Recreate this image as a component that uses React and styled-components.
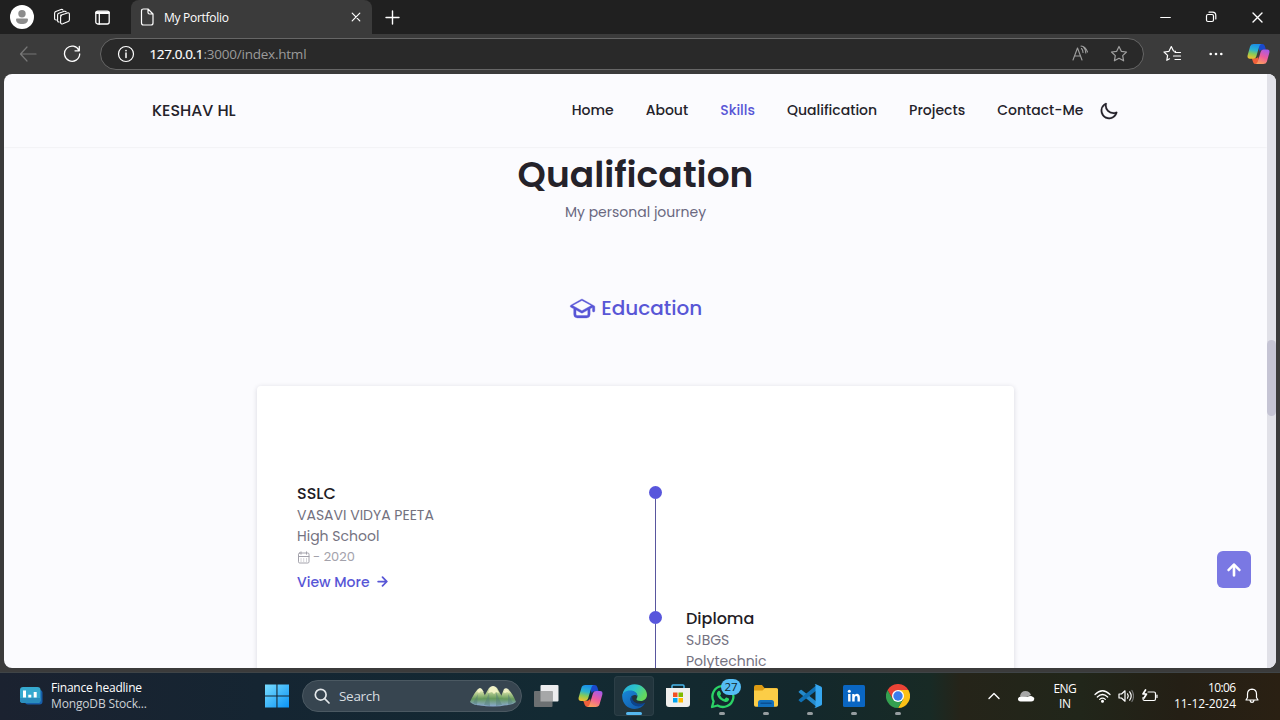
import React from "react";
import styled, { createGlobalStyle } from "styled-components";

const GlobalStyle = createGlobalStyle`
  * { box-sizing: border-box; }
  body { margin: 0; background: #3b3b3b; overflow: hidden; }
  h1, h2, h3, p { margin: 0; }
  svg { display: block; flex: none; }
`;

const Text = styled.span`
  letter-spacing: ${(p) => p.$track || 0}px;
  margin-right: ${(p) => -(p.$track || 0)}px;
  white-space: nowrap;
`;

const Desktop = styled.div`
  display: flex;
  flex-direction: column;
  width: 1280px;
  height: 720px;
  overflow: hidden;
  background: #3b3b3b;
  font-family: "Segoe UI", "Open Sans", "Noto Sans", sans-serif;
`;

/* ---------- browser chrome ---------- */
const TitleBar = styled.header`
  display: flex;
  height: 34px;
  flex: none;
  background: #202020;
`;
const TitleTools = styled.div`
  display: flex;
  align-items: center;
  gap: 19px;
  width: 131px;
  padding-left: 10px;
  svg:last-child { margin-left: 5px; }
`;
const Tab = styled.div`
  display: flex;
  align-items: center;
  width: 241px;
  padding: 0 11px 0 8px;
  border-radius: 8px 8px 0 0;
  background: #3b3b3b;
  color: #fff;
  font-size: 12px;
`;
const TabTitle = styled(Text)`
  flex: 1;
  margin-left: 9px;
`;
const NewTab = styled.div`
  display: flex;
  align-items: center;
  margin-left: 13px;
  flex: 1;
`;
const WindowControls = styled.div`
  display: flex;
  align-items: center;
`;
const WindowButton = styled.div`
  display: flex;
  align-items: center;
  justify-content: center;
  width: 46px;
`;
const Toolbar = styled.div`
  display: flex;
  align-items: center;
  flex: none;
  height: 40px;
  padding: 0 10px 0 19px;
`;
const NavButtons = styled.div`
  display: flex;
  align-items: center;
  gap: 26px;
  width: 81px;
`;
const AddressBar = styled.div`
  display: flex;
  align-items: center;
  flex: none;
  width: 1044px;
  height: 32px;
  padding: 0 15px 0 16px;
  border: 1px solid #666;
  border-radius: 16px;
  background: #292929;
  font-size: 13.5px;
  color: #9b9b9b;
`;
const Host = styled(Text)`
  margin-left: 14.5px;
  color: #fff;
  -webkit-text-stroke: 0.2px #fff;
`;
const Path = styled(Text)`
  flex: 1;
`;
const AddressActions = styled.div`
  display: flex;
  align-items: center;
  gap: 21px;
`;
const ToolbarActions = styled.div`
  display: flex;
  align-items: center;
  flex: 1;
  margin-left: 19px;
  svg:nth-child(2) { margin: 0 24px 0 27px; }
`;

/* ---------- page ---------- */
const Viewport = styled.div`
  display: flex;
  flex: none;
  height: 594px;
  margin: 0 4px 4px;
  border-radius: 8px;
  overflow: hidden;
  background: #fbfbfe;
  font-family: "Poppins", "Inter", sans-serif;
  color: #24222a;
`;
const Page = styled.main`
  display: flex;
  flex-direction: column;
  align-items: center;
  width: 1263px;
  overflow: hidden;
`;
const SiteHeader = styled.div`
  display: flex;
  align-items: center;
  justify-content: space-between;
  flex: none;
  width: 100%;
  height: 73px;
  padding: 0 148px;
  box-shadow: 0 0 2px rgba(0, 0, 0, 0.1);
`;
const Brand = styled(Text)`
  font-size: 15.9px;
  font-weight: 500;
`;
const Menu = styled.nav`
  display: flex;
  align-items: center;
  font-size: 14px;
  font-weight: 500;
  svg { stroke: currentColor; stroke-width: 0.2; }
`;
const MenuList = styled.div`
  display: flex;
  gap: 32px;
  margin: 0 15.5px 0 0;
`;
const MenuLink = styled.span`
  color: ${(p) => (p.$active ? "#5856d6" : "#24222a")};
`;
const SectionTitle = styled.h1`
  margin-top: 6px;
  font-size: 36px;
  font-weight: 600;
  line-height: 44px;
`;
const SectionSubtitle = styled.p`
  margin-top: 4px;
  font-size: 14px;
  line-height: 23px;
  color: #6a6880;
`;
const EducationTab = styled.h2`
  display: flex;
  align-items: center;
  gap: 5.5px;
  margin-top: 70px;
  height: 28px;
  color: #5856d6;
  font-size: 20px;
  font-weight: 500;
  svg { stroke: currentColor; stroke-width: 0.3; }
`;
const Card = styled.section`
  flex: none;
  width: 757px;
  height: 400px;
  margin-top: 64px;
  padding: 98px 40px 0;
  border-radius: 4px;
  background: #fff;
  box-shadow: 0 1px 5px rgba(30, 30, 60, 0.16);
`;
const TimelineRow = styled.div`
  display: grid;
  grid-template-columns: 352px 13px 1fr;
  height: 125px;
`;
const Marker = styled.div`
  display: flex;
  flex-direction: column;
  align-items: center;
  grid-column: 2;
  padding-top: 2px;
`;
const Dot = styled.div`
  flex: none;
  width: 13px;
  height: 13px;
  border-radius: 50%;
  background: #5856dc;
`;
const Line = styled.div`
  width: 1px;
  height: 114px;
  margin-bottom: -4px;
  background: #59569e;
`;
const Entry = styled.div`
  display: flex;
  flex-direction: column;
  align-items: flex-start;
  grid-row: 1;
  grid-column: ${(p) => (p.$right ? 3 : 1)};
  padding-left: ${(p) => (p.$right ? 24 : 0)}px;
`;
const EntryTitle = styled.h3`
  font-size: 16px;
  font-weight: 500;
  line-height: 20px;
  margin-bottom: 1px;
  color: #1f1d26;
`;
const EntryText = styled.p`
  font-size: 14px;
  line-height: 21px;
  color: #74727f;
`;
const EntryDate = styled.div`
  display: flex;
  align-items: center;
  gap: 3px;
  height: 20px;
  font-size: 13px;
  color: #a3a2ab;
`;
const ViewMore = styled.div`
  display: flex;
  align-items: center;
  gap: 3px;
  height: 30px;
  font-size: 14px;
  font-weight: 500;
  color: #5856d6;
  svg { margin: -1px 0 0 -1px; }
`;
const ScrollTrack = styled.div`
  width: 9px;
  padding-top: 266px;
  background: #e1e1e8;
`;
const ScrollThumb = styled.div`
  height: 76px;
  border-radius: 5px;
  background: #c5c4d4;
`;
const ScrollUp = styled.div`
  position: fixed;
  left: 1217px;
  top: 551px;
  display: flex;
  align-items: center;
  justify-content: center;
  width: 34px;
  height: 37px;
  border-radius: 6px;
  background: #7a78e3;
  color: #fff;
  svg { transform: rotate(-90deg); stroke: currentColor; stroke-width: 0.4; }
`;

/* ---------- taskbar ---------- */
const Taskbar = styled.footer`
  display: flex;
  align-items: center;
  flex: none;
  height: 48px;
  padding: 0 21px 1px 20px;
  border-top: 1px solid #3f4447;
  background: linear-gradient(90deg, #1b2230 0, #152532 260px, #132a33 560px, #13282c 800px, #182a25 930px, #252419 960px, #21261a 1080px, #241f15 1180px, #2a2013 1280px);
  color: #fff;
  font-size: 12px;
`;
const Widget = styled.div`
  display: flex;
  align-items: center;
  gap: 8px;
  width: 245px;
`;
const WidgetLines = styled.div`
  display: flex;
  flex-direction: column;
  line-height: 16px;
`;
const WidgetSource = styled(Text)`
  color: #ccd1d6;
`;
const SearchBox = styled.div`
  display: flex;
  align-items: center;
  width: 220px;
  height: 32px;
  margin: 0 4px 0 13px;
  padding: 0 4px 0 11px;
  border: 1px solid #4b5962;
  border-radius: 16px;
  background: #374550;
  font-size: 13.5px;
  color: #d8dde0;
`;
const SearchLabel = styled(Text)`
  flex: 1;
  margin-left: 9px;
`;
const Apps = styled.div`
  display: flex;
  gap: 4px;
`;
const AppSlot = styled.div`
  position: relative;
  display: flex;
  align-items: center;
  justify-content: center;
  width: 40px;
  height: 40px;
  border-radius: 4px;
  background: ${(p) => (p.$active ? "#22353d" : "transparent")};
  box-shadow: ${(p) => (p.$active ? "inset 0 0 0 1px #2c3f47" : "none")};
  &::after {
    content: "";
    position: absolute;
    bottom: 1px;
    width: ${(p) => (p.$active ? 16 : p.$open ? 6 : 0)}px;
    height: 3px;
    border-radius: 2px;
    background: ${(p) => (p.$active ? "#55b8f0" : "#969da0")};
  }
`;
const Badge = styled.div`
  position: absolute;
  top: 3px;
  left: 19px;
  width: 20px;
  height: 16px;
  border-radius: 8px;
  background: #55bdf5;
  color: #12272d;
  font-size: 11.5px;
  line-height: 16px;
  text-align: center;
`;
const Tray = styled.div`
  display: flex;
  align-items: center;
  margin-left: auto;
`;
const Cloud = styled.div`
  margin-left: 17px;
`;
const Language = styled.div`
  display: flex;
  flex-direction: column;
  align-items: center;
  width: 24px;
  margin: 0 17px 0 18px;
  line-height: 15px;
`;
const Status = styled.div`
  display: flex;
  align-items: center;
  gap: 7px;
`;
const Clock = styled.div`
  display: flex;
  flex-direction: column;
  align-items: flex-end;
  margin: 0 9px 0 16px;
  line-height: 16px;
`;

/* ---------- icons ---------- */
const Stroke = ({ w, h = w, color = "#fff", sw = 1.2, children }) => (
  <svg width={w} height={h} viewBox={`0 0 ${w} ${h}`} fill="none" stroke={color} strokeWidth={sw} strokeLinecap="round" strokeLinejoin="round">
    {children}
  </svg>
);
const Solid = ({ size, d, box = "0 0 24 24" }) => (
  <svg width={size} height={size} viewBox={box} fill="currentColor"><path d={d} /></svg>
);
const MOON = "M21.64,13a1,1,0,0,0-1.05-.14,8.05,8.05,0,0,1-3.37.73A8.15,8.15,0,0,1,9.08,5.49a8.59,8.59,0,0,1,.25-2A1,1,0,0,0,8,2.36,10.14,10.14,0,1,0,22,14.05,1,1,0,0,0,21.64,13Zm-9.5,6.69A8.14,8.14,0,0,1,7.08,5.22v.27A10.15,10.15,0,0,0,17.22,15.63a9.79,9.79,0,0,0,2.1-.22A8.11,8.11,0,0,1,12.14,19.73Z";
const CAP = "M21.49,10.19l-1-.55h0l-9-5h-.11a1.06,1.06,0,0,0-.19-.06l-.19,0h-.18a1.17,1.17,0,0,0-.2.06h-.11l-9,5a1,1,0,0,0,0,1.74L4,12.76V17.5a3,3,0,0,0,3,3h8a3,3,0,0,0,3-3V12.76l2-1.12V14.5a1,1,0,0,0,2,0V11.06A1,1,0,0,0,21.49,10.19ZM16,17.5a1,1,0,0,1-1,1H7a1,1,0,0,1-1-1V13.87l4.51,2.5.15.06.09,0a1,1,0,0,0,.25,0h0a1,1,0,0,0,.25,0l.09,0a.47.47,0,0,0,.15-.06L16,13.87Zm-5-3.14L3.06,10,11,5.64,18.94,10Z";
const ARROW = "M17.92,11.62a1,1,0,0,0-.21-.33l-5-5a1,1,0,0,0-1.42,1.42L14.59,11H7a1,1,0,0,0,0,2h7.59l-3.3,3.29a1,1,0,0,0,0,1.42,1,1,0,0,0,1.42,0l5-5a1,1,0,0,0,.21-.33A1,1,0,0,0,17.92,11.62Z";
const STAR = "M9 1.5l2.3 4.8 5.2.7-3.8 3.6.9 5.2L9 13.3l-4.6 2.5.9-5.2L1.500 7l5.200-.7z";

const Profile = () => (
  <svg width="24" height="24" viewBox="0 0 24 24">
    <circle cx="12" cy="12" r="12" fill="#fff" />
    <circle cx="12" cy="8.700" r="3.700" fill="#8c8c8c" />
    <path d="M6 14.500q0-1 1-1h10q1 0 1 1c0 3.200-2.600 4.500-6 4.500s-6-1.300-6-4.500z" fill="#8c8c8c" />
  </svg>
);
const Workspaces = () => (
  <Stroke w={18} sw={1.100}>
    <path d="M7.500 7.200l7-2.300q1.700-.4 1.900 1.200v5.700q0 1.300-1.200 1.700l-5.400 2.300q-1.900.6-2.200-1.200V8.900q0-1 .9-1.500" />
    <path d="M6.200 14q-1.600.2-1.600-1.500V7q0-1.200 1.200-1.700l5.600-2q1.300-.3 1.800.7" />
    <path d="M3.400 12q-1.800.1-1.800-1.600V5.200q0-1.200 1.200-1.700l5.300-2q1.200-.3 1.900.5" />
  </Stroke>
);
const SidebarIcon = () => (
  <Stroke w={15} h={15} sw={1.300}>
    <rect x=".8" y="1.200" width="13.400" height="12.800" rx="2" />
    <path d="M1.500 2.700h12" strokeWidth="2.600" />
    <path d="M4.300 3v11" />
  </Stroke>
);
const Copilot = ({ id, w = 24 }) => (
  <svg width={w} height={w * 0.96} viewBox="0 0 24 23">
    <defs>
      <linearGradient id={id + "a"} x1=".5" y1="0" x2=".3" y2="1">
        <stop offset="0" stopColor="#1b8fe8" /><stop offset=".4" stopColor="#2bb4cf" /><stop offset=".68" stopColor="#8acb55" /><stop offset="1" stopColor="#f2bf30" />
      </linearGradient>
      <linearGradient id={id + "b"} x1=".7" y1="0" x2=".3" y2="1">
        <stop offset="0" stopColor="#a65ae8" /><stop offset=".5" stopColor="#ee5c9b" /><stop offset="1" stopColor="#fba05c" />
      </linearGradient>
    </defs>
    <path d="M11 1h5q2 0 2.600 2l1.200 4h-4q-2 0-2.600 2z" fill="#1a49cc" />
    <path d="M13 22H9q-2 0-2.600-2L5 16h4q2 0 2.600-2z" fill="#f0603a" />
    <path d="M7 1h8q-1.600.4-2.200 2.500L9.700 14q-.7 2.300-3 2.300H3Q0 16.300.6 13L3.300 3.500Q4 1 7 1z" fill={`url(#${id}a)`} />
    <path d="M17 22H9q1.600-.4 2.200-2.500L14.300 9q.7-2.300 3-2.300H21q3 0 2.400 3.300l-2.700 9.500Q20 22 17 22z" fill={`url(#${id}b)`} />
  </svg>
);
const FinanceIcon = () => (
  <svg width="23" height="18" viewBox="0 0 23 18">
    <rect x="5" y="3" width="17.500" height="14.500" rx="3" fill="#175eaa" />
    <rect x="0" y="0" width="20.500" height="16" rx="3" fill="#36a9cf" />
    <path d="M0 11h20.500v2a3 3 0 0 1-3 3H3a3 3 0 0 1-3-3z" fill="#2a8dbd" />
    <path d="M4.500 3.500v7M9.800 7.800v2.700M15.200 5v5.500" stroke="#fff" strokeWidth="3" />
  </svg>
);
const WindowsLogo = () => (
  <svg width="24" height="24" viewBox="0 0 24 24">
    <defs><linearGradient id="win" x1="0" y1="0" x2="1" y2="1"><stop stopColor="#78dcff" /><stop offset="1" stopColor="#0a93f5" /></linearGradient></defs>
    <path d="M0 .5h11.400v11H0zM12.500.5H24v11H12.500zM0 12.600h11.400v11H0zM12.500 12.600H24v11H12.500z" fill="url(#win)" />
  </svg>
);
const Mountains = () => (
  <svg width="48" height="22" viewBox="0 0 48 22">
    <defs><linearGradient id="mt" x1="0" y1="0" x2="0" y2="1"><stop stopColor="#f5f4d5" /><stop offset=".25" stopColor="#c6d79b" /><stop offset=".62" stopColor="#65995b" /><stop offset="1" stopColor="#8ba9d4" /></linearGradient></defs>
    <path d="M1 17Q5 8 9 4q2-1.500 4 0l7 16q-14 2-19-3zM29 19L35 4q2-1.500 4 0 5 5 8 13-5 5-18 2z" fill="url(#mt)" />
    <path d="M10 20L20 3q4-4 8 0l10 17q-14 3-28 0z" fill="url(#mt)" />
    <path d="M15 20l5-12 1 13zM27 21V7l6 13zM4 18l5-9-1 11zM39 20l0-11 5 9z" fill="#527d78" opacity=".45" />
    <path d="M21 3q3-3 6 0l3 5-3-1-2 2-2-2-4 1zM8 6l3-3 4 4-3-1-2 2zM34 7l3-3 4 4-3-1-2 1z" fill="#f1f2c4" />
  </svg>
);
const TaskView = () => (
  <svg width="25" height="23" viewBox="0 0 25 23">
    <rect x="6.500" y="0" width="18" height="16.500" rx="1" fill="#ececee" />
    <rect x="0" y="6" width="18.500" height="16" rx="1" fill="#6c7072" />
    <rect x="6.500" y="6" width="12" height="10.500" fill="#a6a7a8" />
  </svg>
);
const Edge = () => (
  <svg width="25" height="25" viewBox="0 0 24 24">
    <defs>
      <linearGradient id="edTop" x1="0" y1="0" x2="1" y2=".5"><stop stopColor="#27a7dc" /><stop offset=".5" stopColor="#2bc3ca" /><stop offset="1" stopColor="#64d95b" /></linearGradient>
      <linearGradient id="edBot" x1="0" y1="0" x2="1" y2="1"><stop stopColor="#1788d8" /><stop offset="1" stopColor="#1355a5" /></linearGradient>
    </defs>
    <path d="M.3 12C.5 5 5.500.2 12 .2S24 5 24 10.300c0 3.700-2.800 6-6 6-2.600 0-4.200-1-4.200-1.700 0-.6 1-1.100 1-2.800C14.800 9 12 7 8.500 7 4 7 1 9.500.3 12z" fill="url(#edTop)" />
    <path d="M.2 12C.2 8.700 3.400 6.200 7.700 6.200c4.600 0 7.100 2.600 7.100 5.600C13 9.700 9.500 10.500 8.500 13c-1.300 4 2.500 8.800 8.500 7.700l5-2.200C20 22 16.500 24 12.200 24 5.500 24 .2 18.800.2 12z" fill="url(#edBot)" />
    <path d="M10 10.700C6.300 13 8 21.500 16 21.500c2.600 0 4.800-1.200 6-2.700.4-.5 0-.9-.6-.6-3.700 1.700-10.300.8-11.400-3.700-.4-1.500-.4-2.700 0-3.800z" fill="#0d438c" />
  </svg>
);
const Store = () => (
  <svg width="24" height="24" viewBox="0 0 24 24">
    <path d="M6 5V2q0-1 1-1h10q1 0 1 1v3" fill="none" stroke="#4ab6ea" strokeWidth="1.500" />
    <path d="M0 4h24v16q0 3-3 3H3q-3 0-3-3z" fill="#f0efed" />
    <path d="M7 8.500h4.500V13H7z" fill="#f25022" /><path d="M12.500 8.500H17V13h-4.500z" fill="#7fba00" />
    <path d="M7 14h4.500v4.500H7z" fill="#00a4ef" /><path d="M12.500 14H17v4.500h-4.500z" fill="#ffb900" />
  </svg>
);
const WhatsApp = () => (
  <svg width="25" height="25" viewBox="0 0 25 25" fill="none">
    <path d="M2 23l1.600-5.700A10.500 10.500 0 1 1 7.600 21.500z" stroke="#2bd366" strokeWidth="2.300" strokeLinejoin="round" />
    <path d="M8 7.300q1-1.300 2 0l1 2.200q.3.700-.9 1.900 1.500 2.800 4.300 3.800l1.300-1.500q.4-.5 1-.2l2 1q.7.400.2 1.600-1 2.300-3.700 1.800-6.400-1.400-8.300-7.300-.4-2 1.100-3.300z" fill="#2bd366" />
  </svg>
);
const Explorer = () => (
  <svg width="24" height="22" viewBox="0 0 24 22">
    <path d="M0 2q0-2 2-2h6l2.500 3H22q2 0 2 2v4H0z" fill="#dd9b13" />
    <path d="M0 5.500h8.500L11 3.200h11.500q1.500 0 1.500 1.500V20q0 1.800-1.800 1.800H1.800Q0 21.800 0 20z" fill="#fccd47" />
    <path d="M4 22v-4.500Q4 15 6.500 15h11q2.500 0 2.500 2.500V22z" fill="#1270bd" />
    <path d="M7 18.300h10" stroke="#0a4f92" strokeWidth="1.500" strokeLinecap="round" />
  </svg>
);
const VSCode = () => (
  <svg width="24" height="24" viewBox="0 0 24 24">
    <path d="M1 7.200l1.500-1.300q.6-.4 1.200 0L19 18v5.200L.9 8.500Q.2 7.800 1 7.200z" fill="#2489ca" />
    <path d="M1 16.800l1.500 1.300q.6.400 1.200 0L19 6V.8L.9 15.500q-.7.700.1 1.300z" fill="#1070b3" />
    <path d="M17.400 0L23 2.600q1 .5 1 1.500v15.800q0 1-1 1.500L17.400 24q-.7.200-1.200-.3 1.300.6 1.300-1V1.300q0-1.600-1.300-1z" fill="#36a7f0" />
  </svg>
);
const LinkedIn = () => (
  <svg width="22" height="22" viewBox="0 0 22 22">
    <rect width="22" height="22" rx="1.500" fill="#0a66c2" />
    <circle cx="6.300" cy="6.300" r="1.500" fill="#fff" />
    <path d="M5.100 9h2.400v7.500H5.100zM9.200 9h2.300v1q2.700-2.300 4.700 0 .7.900.7 2.700v3.800h-2.400v-3.600q0-1.800-1.300-1.800-1.500 0-1.500 1.800v3.600H9.200z" fill="#fff" />
  </svg>
);
const Chrome = () => (
  <svg width="24" height="24" viewBox="0 0 24 24">
    <path d="M12 12V6h10.400A12 12 0 0 1 12 24l5.200-9z" fill="#fbc116" />
    <path d="M1.600 6A12 12 0 0 0 12 24l5.200-9H6.800z" fill="#34a050" />
    <path d="M1.600 6l5.200 9L12 12V6h10.400A12 12 0 0 0 1.600 6z" fill="#ea4335" />
    <circle cx="12" cy="12" r="6" fill="#fff" /><circle cx="12" cy="12" r="4.700" fill="#3b7ded" />
  </svg>
);

const links = ["Home", "About", "Skills", "Qualification", "Projects", "Contact-Me"];

export default function App() {
  return (
    <Desktop>
      <GlobalStyle />
      <TitleBar>
        <TitleTools>
          <Profile /><Workspaces /><SidebarIcon />
        </TitleTools>
        <Tab>
          <Stroke w={16} h={18}><path d="M2.500 3q0-2 2-2H9l5 5v9q0 2-2 2H4.500q-2 0-2-2zM9 1v3.500Q9 6 10.500 6H14" /></Stroke>
          <TabTitle $track={-0.28}>My Portfolio</TabTitle>
          <Stroke w={10}><path d="M1.200 1.200l7.600 7.600M8.800 1.200L1.200 8.800" /></Stroke>
        </Tab>
        <NewTab><Stroke w={15} sw={1.400}><path d="M7.500 1v13M1 7.500h13" /></Stroke></NewTab>
        <WindowControls>
          <WindowButton><Stroke w={11}><path d="M.7 5.500h9.600" /></Stroke></WindowButton>
          <WindowButton><Stroke w={12}><rect x="1.500" y="3.500" width="7" height="7" rx="1.500" /><path d="M4 1.200h3.500q3.300 0 3.300 3.300V8" /></Stroke></WindowButton>
          <WindowButton><Stroke w={11} sw={1.400}><path d="M1 1l9 9M10 1l-9 9" /></Stroke></WindowButton>
        </WindowControls>
      </TitleBar>
      <Toolbar>
        <NavButtons>
          <Stroke w={18} color="#777"><path d="M17 9H1.500M8 2L1.500 9 8 16" /></Stroke>
          <Stroke w={18} sw={1.300}><path d="M16 5.500A7.600 7.600 0 1 0 16.700 9M16.300 1.500v4.300h-4.300" /></Stroke>
        </NavButtons>
        <AddressBar>
          <Stroke w={18}><circle cx="9" cy="9" r="7.500" /><path d="M9 8v4.500" strokeWidth="1.500" /><path d="M9 5.500v.1" strokeWidth="1.700" /></Stroke>
          <Host $track={-0.37}>127.0.0.1</Host>
          <Path $track={-0.23}>:3000/index.html</Path>
          <AddressActions>
            <Stroke w={18} color="#a0a0a0" sw={1.100}><path d="M2 15L6.500 3 11 15M3.500 11h6M10.500 3.500q1.500 1.500 1.500 4M12.500 2q2.200 2 2.300 6M10 1q4.500.5 6.500 6" /></Stroke>
            <Stroke w={18} color="#a0a0a0"><path d={STAR} /></Stroke>
          </AddressActions>
        </AddressBar>
        <ToolbarActions>
          <Stroke w={19} h={18}>
            <path d="M6.500 13.800L3.800 15.300l.8-4.900L1 7l5-.7L8.300 1.600 10.500 6l2 .3" />
            <path d="M12 7.500h5.500M10.500 11h7M12 14.500h5.500" />
          </Stroke>
          <svg width="14" height="4" viewBox="0 0 14 4" fill="#fff"><circle cx="1.700" cy="2" r="1.300" /><circle cx="7" cy="2" r="1.300" /><circle cx="12.300" cy="2" r="1.300" /></svg>
          <Copilot id="top" w={23} />
        </ToolbarActions>
      </Toolbar>

      <Viewport>
        <Page>
          <SiteHeader>
            <Brand>KESHAV HL</Brand>
            <Menu>
              <MenuList>
                {links.map((label) => (
                  <MenuLink key={label} $active={label === "Skills"}>{label}</MenuLink>
                ))}
              </MenuList>
              <Solid size={20} d={MOON} />
            </Menu>
          </SiteHeader>
          <SectionTitle>Qualification</SectionTitle>
          <SectionSubtitle>My personal journey</SectionSubtitle>
          <EducationTab><Solid size={27} d={CAP} box="0 1 23 23" />Education</EducationTab>
          <Card>
            <TimelineRow>
              <Entry>
                <EntryTitle>SSLC</EntryTitle>
                <EntryText>VASAVI VIDYA PEETA</EntryText>
                <EntryText>High School</EntryText>
                <EntryDate>
                  <Stroke w={13} color="#a3a2ab" sw={1}><rect x="1.500" y="2" width="10.500" height="10" rx="1.200" /><path d="M1.500 5.500H12M4 .8v2.400M9.500.8v2.400M4 8h.1M6.700 8h.1M9.400 8h.1M4 10h.1M6.700 10h.1M9.400 10h.1" /></Stroke>
                  <Text>- 2020</Text>
                </EntryDate>
                <ViewMore>View More<Solid size={21} d={ARROW} /></ViewMore>
              </Entry>
              <Marker><Dot /><Line /></Marker>
            </TimelineRow>
            <TimelineRow>
              <Marker><Dot /><Line /></Marker>
              <Entry $right>
                <EntryTitle>Diploma</EntryTitle>
                <EntryText>SJBGS</EntryText>
                <EntryText>Polytechnic</EntryText>
              </Entry>
            </TimelineRow>
          </Card>
        </Page>
        <ScrollTrack><ScrollThumb /></ScrollTrack>
        <ScrollUp><Solid size={26} d={ARROW} /></ScrollUp>
      </Viewport>

      <Taskbar>
        <Widget>
          <FinanceIcon />
          <WidgetLines>
            <Text $track={-0.23}>Finance headline</Text>
            <WidgetSource $track={-0.15}>MongoDB Stock...</WidgetSource>
          </WidgetLines>
        </Widget>
        <WindowsLogo />
        <SearchBox>
          <Stroke w={16} color="#e4e8ea" sw={1.700}><circle cx="6.700" cy="6.700" r="5.400" /><path d="M10.700 10.700L15 15" /></Stroke>
          <SearchLabel $track={-0.3}>Search</SearchLabel>
          <Mountains />
        </SearchBox>
        <Apps>
          <AppSlot><TaskView /></AppSlot>
          <AppSlot><Copilot id="bar" w={25} /></AppSlot>
          <AppSlot $active><Edge /></AppSlot>
          <AppSlot><Store /></AppSlot>
          <AppSlot $open><WhatsApp /><Badge>27</Badge></AppSlot>
          <AppSlot $open><Explorer /></AppSlot>
          <AppSlot $open><VSCode /></AppSlot>
          <AppSlot $open><LinkedIn /></AppSlot>
          <AppSlot $open><Chrome /></AppSlot>
        </Apps>
        <Tray>
          <Stroke w={12} h={8} sw={1.400}><path d="M1 6.500L6 1.500l5 5" /></Stroke>
          <Cloud>
            <svg width="18" height="12" viewBox="0 0 18 12">
              <path d="M3 6Q4 1 8.500 1q4 0 5.500 4l-9 4z" fill="#a7a7a7" />
              <path d="M1 9.500q-.3-2.300 2.500-2.700Q6.500 6.500 10 7q4-2 6 0 1.500.5 1.300 2-.3 2.500-3 2.500H3.500Q1.300 11.500 1 9.500z" fill="#fff" />
            </svg>
          </Cloud>
          <Language><Text $track={-0.6}>ENG</Text><Text $track={-0.39}>IN</Text></Language>
          <Status>
            <Stroke w={17} h={14}><path d="M1 5.500q7.500-7.500 15 0M3.300 8q5.200-5 10.400 0M5.700 10.400q2.800-2.600 5.600 0" /><circle cx="8.500" cy="12.300" r=".9" fill="#fff" /></Stroke>
            <Stroke w={16} h={14}><path d="M1 5h2.500L7 1.800v10.400L3.500 9H1zM9.500 4.800q1.600 2.200 0 4.400M11.700 2.800q3 4.200 0 8.400" /><path d="M13.900 1.500q3.300 5.500 0 11" stroke="#777" /></Stroke>
            <Stroke w={17} h={14}><path d="M7 3h6q1.500 0 1.500 1.500v5.500q0 1.500-1.500 1.500H3.500Q2 11.500 2 10V8.500M16 6v2.500" /><path d="M4.500 1L2 5h3.500L3 9" strokeWidth="1.700" /></Stroke>
          </Status>
          <Clock><Text $track={-0.65}>10:06</Text><Text $track={-0.07}>11-12-2024</Text></Clock>
          <Stroke w={14} h={16}><path d="M7 1.200q4.500.3 4.500 4.800v3.500L13 12H1l1.500-2.500V6Q2.500 1.500 7 1.200zM5 12.300q.3 2 2 2t2-2" /></Stroke>
        </Tray>
      </Taskbar>
    </Desktop>
  );
}
